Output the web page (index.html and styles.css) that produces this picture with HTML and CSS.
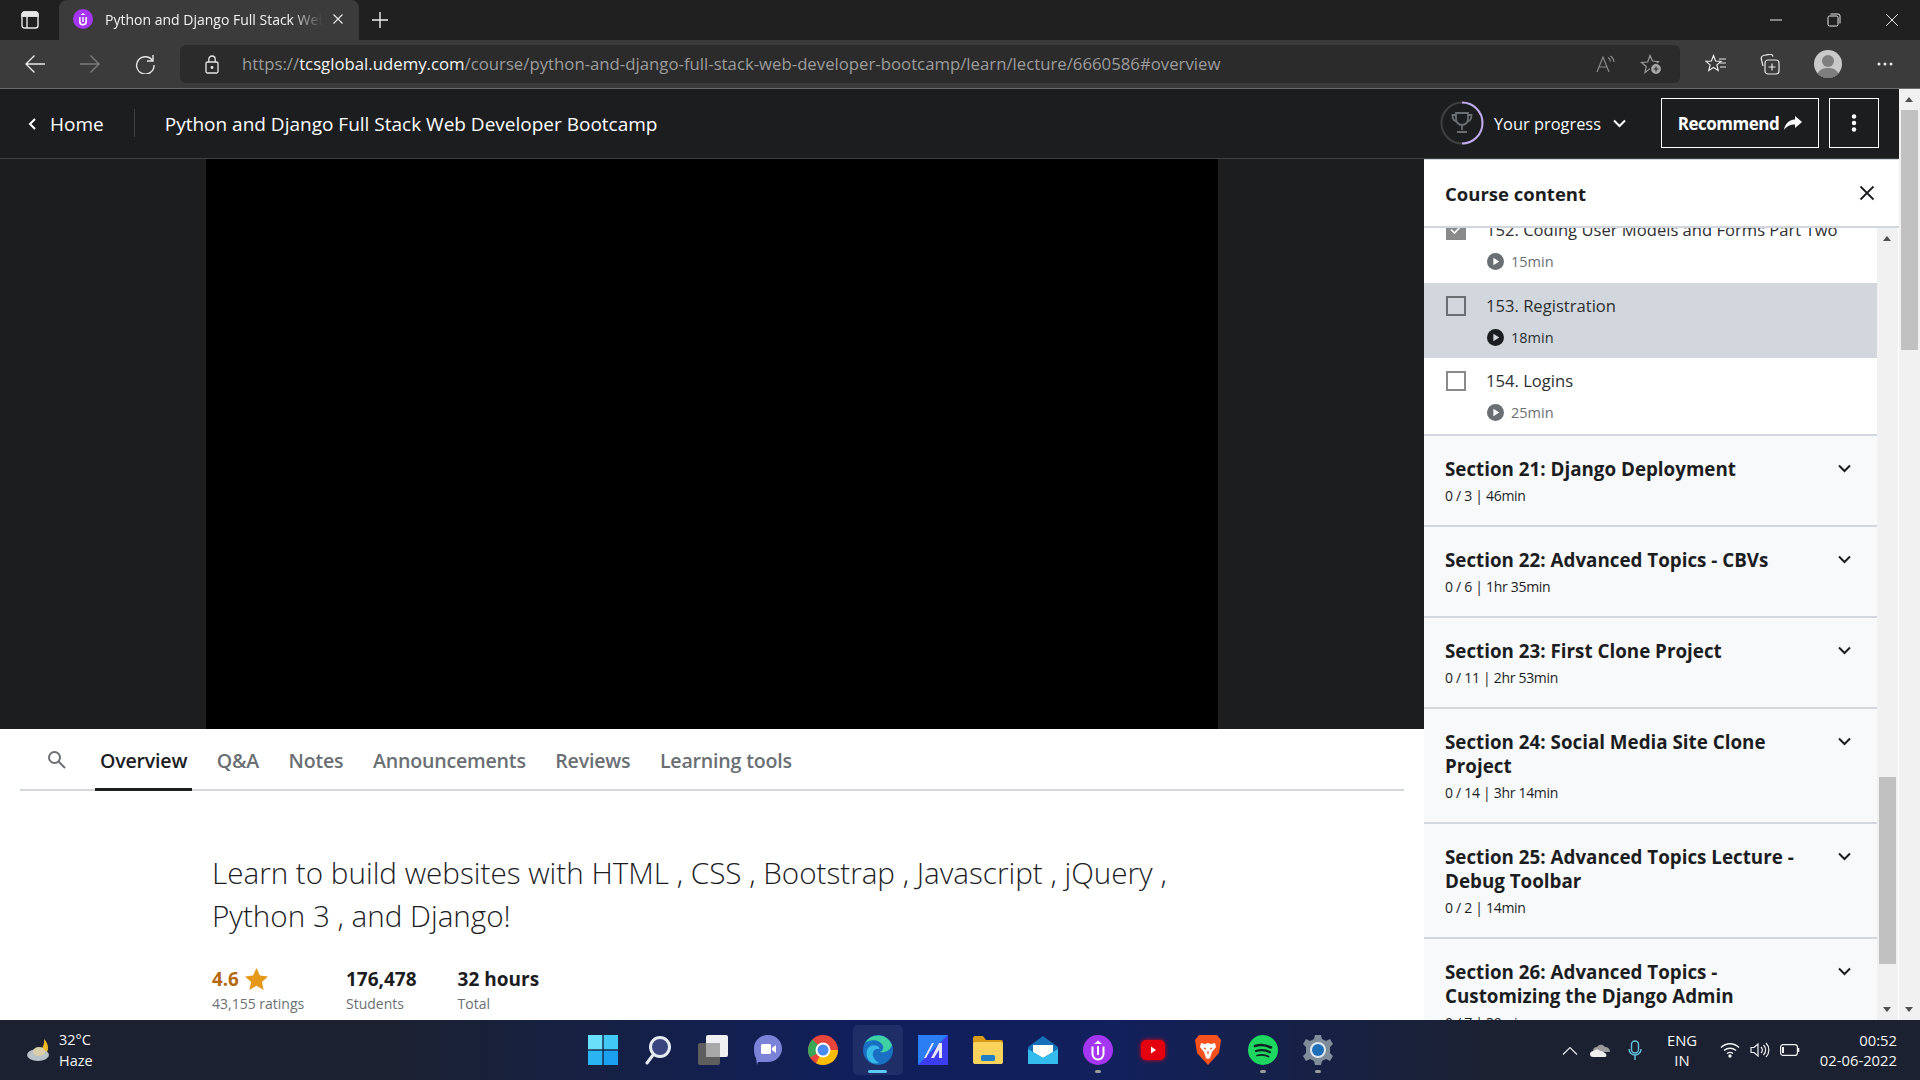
FILE: index.html
```html
<!DOCTYPE html>
<html>
<head>
    <title>Python and Django Full Stack Web Developer Bootcamp</title>
    <meta charset="utf-8">
    <link rel="stylesheet" href="styles.css">
</head>
<body>
    <!-- browser tabs -->
    <div class="tabstrip">
        <span class="tabs_btn">
            <svg width="18" height="18" viewBox="0 0 18 18" fill="none" stroke="#e8e8e8" stroke-width="1.4"><rect x="1" y="1" width="16" height="16" rx="2.5"/><path d="M1 5h16M6 5v12"/><path d="M1 3.5a2.5 2.5 0 0 1 2.5-2.5h11a2.5 2.5 0 0 1 2.5 2.5V5H1z" fill="#e8e8e8"/></svg>
        </span>
        <div class="tab">
            <svg width="20" height="20" viewBox="0 0 20 20"><circle cx="10" cy="10" r="10" fill="#a435f0"/><path d="M6.8 8v4.6a3.2 3.2 0 0 0 6.4 0V8" fill="none" stroke="#fff" stroke-width="1.6"/><path d="M7.5 6 10 4l2.5 2z" fill="#fff"/><path d="M10 8v5" stroke="#fff" stroke-width="1.4"/></svg>
            <span class="tab_title">Python and Django Full Stack Web Developer</span>
            <svg width="12" height="12" viewBox="0 0 12 12" stroke="#e8e8e8" stroke-width="1.2"><path d="M1.5 1.5l9 9M10.5 1.5l-9 9"/></svg>
        </div>
        <span class="new_tab">
            <svg width="18" height="18" viewBox="0 0 18 18" stroke="#f0f0f0" stroke-width="1.4"><path d="M9 1v16M1 9h16"/></svg>
        </span>
        <div class="win_btns">
            <svg width="14" height="14" viewBox="0 0 14 14" stroke="#e8e8e8" stroke-width="1"><path d="M1 7h12"/></svg>
            <svg width="14" height="14" viewBox="0 0 14 14" fill="none" stroke="#e8e8e8" stroke-width="1"><rect x="1" y="3" width="10" height="10" rx="1.5"/><path d="M3.5 1h7.5a2 2 0 0 1 2 2v7.5"/></svg>
            <svg width="14" height="14" viewBox="0 0 14 14" stroke="#e8e8e8" stroke-width="1"><path d="M1 1l12 12M13 1L1 13"/></svg>
        </div>
    </div>

    <!-- address bar -->
    <div class="toolbar">
        <div class="nav_btns">
            <svg width="20" height="20" viewBox="0 0 20 20" fill="none" stroke="#e8e8e8" stroke-width="1.4"><path d="M20 10H1M9.5 1.5 1 10l8.5 8.5"/></svg>
            <svg width="20" height="20" viewBox="0 0 20 20" fill="none" stroke="#7c7c7c" stroke-width="1.4"><path d="M0 10h19M10.5 1.5 19 10l-8.500 8.500"/></svg>
            <svg width="20" height="20" viewBox="0 0 20 20" fill="none" stroke="#e8e8e8" stroke-width="1.4"><path d="M17.500 6.500A8.700 8.700 0 1 0 19 11"/><path d="M18 1v6h-6"/></svg>
        </div>
        <div class="address">
            <svg width="14" height="19" viewBox="0 0 14 19" fill="none" stroke="#e8e8e8" stroke-width="1.300"><rect x="1" y="7" width="12" height="11" rx="1.500"/><path d="M3.800 7V4.200a3.200 3.200 0 0 1 6.400 0V7"/><circle cx="7" cy="12.500" r=".8" fill="#e8e8e8"/></svg>
            <span class="url"><span class="url_dim">https://</span>tcsglobal.udemy.com<span class="url_dim">/course/python-and-django-full-stack-web-developer-bootcamp/learn/lecture/6660586#overview</span></span>
            <span class="addr_icons">
                <svg width="20" height="18" viewBox="0 0 20 18" fill="none" stroke="#8a8a8a" stroke-width="1.200"><path d="M1 17 7 2l6 15M3.200 12h7.600"/><path d="M13 1.500a5 5 0 0 1 2.500 4M15.500 0a8 8 0 0 1 3.500 6" transform="translate(-1 1)"/></svg>
                <svg width="22" height="21" viewBox="0 0 22 21" fill="none" stroke="#9a9a9a" stroke-width="1.200"><path d="M10 1.500 12.500 7l6 .6-4.500 4 1 5.900L10 14.600l-5 3.900 1.200-6-4.700-4 6.200-.5z"/><circle cx="16" cy="15" r="5.500" fill="#a8a8a8" stroke="#2b2b2b"/><path d="M16 12.500v5M13.500 15h5" stroke="#2b2b2b"/></svg>
            </span>
        </div>
        <div class="tool_icons">
            <svg class="tool_fav" width="21" height="20" viewBox="0 0 21 20" fill="none" stroke="#e8e8e8" stroke-width="1.200"><path d="M8.500 1.500 10.600 7l5.400.4-4.100 3.500 1.300 5.600-4.700-3-4.700 3 1.300-5.600L1 7.400 6.400 7z"/><path d="M14 5h7M15 9h6M15 13h6"/></svg>
            <svg class="tool_col" width="20" height="21" viewBox="0 0 20 21" fill="none" stroke="#e8e8e8" stroke-width="1.200"><path d="M3 12 1.300 5A3 3 0 0 1 3.500 1.500l6-1.200A3 3 0 0 1 13 2.500"/><rect x="5" y="6" width="14" height="14" rx="3"/><path d="M12 9.500v7M8.500 13h7"/></svg>
            <svg class="tool_avatar" width="28" height="28" viewBox="0 0 28 28"><circle cx="14" cy="14" r="14" fill="#c9c9c9"/><circle cx="14" cy="11" r="6" fill="#7e7e7e"/><path d="M3.500 23.500C6 19 10 18 14 18s8 1 10.500 5.500A14 14 0 0 1 3.500 23.500z" fill="#7e7e7e"/></svg>
            <svg class="tool_more" width="16" height="4" viewBox="0 0 16 4" fill="#e8e8e8"><circle cx="2" cy="2" r="1.500"/><circle cx="8" cy="2" r="1.500"/><circle cx="14" cy="2" r="1.500"/></svg>
        </div>
    </div>

    <div class="page">
        <div class="course">
            <div class="course_head">
                <a class="home_link">
                    <svg width="8" height="12" viewBox="0 0 8 12" fill="none" stroke="#fff" stroke-width="2"><path d="M7 1 2 6l5 5"/></svg>
                    Home
                </a>
                <span class="head_sep"></span>
                <span class="course_title">Python and Django Full Stack Web Developer Bootcamp</span>
                <div class="progress">
                    <svg width="44" height="44" viewBox="0 0 44 44" fill="none">
                        <circle cx="22" cy="22" r="20.500" stroke="#3e4143" stroke-width="2"/>
                        <path d="M22 1.500a20.500 20.500 0 0 1 0 41" stroke="#c0a9ee" stroke-width="2"/>
                        <path d="M16 12h12v6a6 6 0 0 1-12 0zM22 24v5M17 31h10M16 14h-3.500c0 4 1.500 6 4 6.500M28 14h3.500c0 4-1.500 6-4 6.500" stroke="#6a6f73" stroke-width="1.800"/>
                    </svg>
                    <span>Your progress</span>
                    <svg width="13" height="9" viewBox="0 0 13 9" fill="none" stroke="#fff" stroke-width="2"><path d="M1 1.500l5.500 5.500L12 1.500"/></svg>
                </div>
                <button class="recommend">Recommend
                    <svg width="18" height="14" viewBox="0 0 18 14" fill="#fff"><path d="M11 0l7 6-7 6V8.500C6 8.500 3 10 0 14 1 8 4.500 4 11 3.500z"/></svg>
                </button>
                <button class="more_btn">
                    <svg width="6" height="18" viewBox="0 0 6 18" fill="#fff"><circle cx="3" cy="2.500" r="2.200"/><circle cx="3" cy="9" r="2.200"/><circle cx="3" cy="15.500" r="2.200"/></svg>
                </button>
            </div>

            <div class="course_body">
                <div class="main_col">
                    <div class="video_wrap"><div class="video"></div></div>
                    <div class="tabs_bar">
                        <svg class="search_icon" width="19" height="19" viewBox="0 0 19 19" fill="none" stroke="#6a6f73" stroke-width="2"><circle cx="7.500" cy="7.500" r="5.500"/><path d="M11.500 11.500 18 18"/></svg>
                        <span class="tab_link active">Overview</span>
                        <span class="tab_link">Q&amp;A</span>
                        <span class="tab_link">Notes</span>
                        <span class="tab_link">Announcements</span>
                        <span class="tab_link">Reviews</span>
                        <span class="tab_link">Learning tools</span>
                    </div>
                    <div class="overview">
                        <p class="headline">Learn to build websites with HTML , CSS , Bootstrap , Javascript , jQuery , Python 3 , and Django!</p>
                        <div class="stats">
                            <div class="stat stat_rating">
                                <div class="rating">4.6
                                    <svg width="23" height="22" viewBox="0 0 23 22" fill="#e59819"><path d="M11.500 0l3.400 7.600 8.100.8-6.100 5.500 1.800 8.100-7.200-4.200L4.300 22l1.800-8.100L0 8.400l8.100-.8z"/></svg>
                                </div>
                                <div class="stat_label">43,155 ratings</div>
                            </div>
                            <div class="stat stat_students">
                                <div class="stat_num">176,478</div>
                                <div class="stat_label">Students</div>
                            </div>
                            <div class="stat">
                                <div class="stat_num">32 hours</div>
                                <div class="stat_label">Total</div>
                            </div>
                        </div>
                    </div>
                </div>

                <div class="sidebar">
                    <div class="side_head">
                        <span>Course content</span>
                        <svg width="16" height="16" viewBox="0 0 16 16" stroke="#1c1d1f" stroke-width="1.800"><path d="M1.500 1.500l13 13M14.500 1.500l-13 13"/></svg>
                    </div>
                    <div class="side_body">
                        <div class="side_list">
                            <div class="lecture first">
                                <span class="check done"><svg width="12" height="9" viewBox="0 0 12 9" fill="none" stroke="#fff" stroke-width="1.600"><path d="M1 4.500 4.500 8 11 1"/></svg></span>
                                <div>
                                    <div class="lec_title">152. Coding User Models and Forms Part Two</div>
                                    <div class="lec_time"><svg class="play" viewBox="0 0 16 16"><circle cx="8" cy="8" r="8"/><path d="M6 4.500 11.500 8 6 11.500z" fill="#fff"/></svg>15min</div>
                                </div>
                            </div>
                            <div class="lecture current">
                                <span class="check"></span>
                                <div>
                                    <div class="lec_title">153. Registration</div>
                                    <div class="lec_time"><svg class="play" viewBox="0 0 16 16"><circle cx="8" cy="8" r="8"/><path d="M6 4.500 11.500 8 6 11.500z" fill="#d1d7dc"/></svg>18min</div>
                                </div>
                            </div>
                            <div class="lecture last">
                                <span class="check"></span>
                                <div>
                                    <div class="lec_title">154. Logins</div>
                                    <div class="lec_time"><svg class="play" viewBox="0 0 16 16"><circle cx="8" cy="8" r="8"/><path d="M6 4.500 11.500 8 6 11.500z" fill="#fff"/></svg>25min</div>
                                </div>
                            </div>
                            <div class="section">
                                <div><div class="sec_title">Section 21: Django Deployment</div><div class="sec_meta">0 / 3 | 46min</div></div>
                                <svg class="chev" viewBox="0 0 13 9"><path d="M1 1.500l5.500 5.500L12 1.500"/></svg>
                            </div>
                            <div class="section">
                                <div><div class="sec_title">Section 22: Advanced Topics - CBVs</div><div class="sec_meta">0 / 6 | 1hr 35min</div></div>
                                <svg class="chev" viewBox="0 0 13 9"><path d="M1 1.500l5.500 5.500L12 1.500"/></svg>
                            </div>
                            <div class="section">
                                <div><div class="sec_title">Section 23: First Clone Project</div><div class="sec_meta">0 / 11 | 2hr 53min</div></div>
                                <svg class="chev" viewBox="0 0 13 9"><path d="M1 1.500l5.500 5.500L12 1.500"/></svg>
                            </div>
                            <div class="section">
                                <div><div class="sec_title">Section 24: Social Media Site Clone<br>Project</div><div class="sec_meta">0 / 14 | 3hr 14min</div></div>
                                <svg class="chev" viewBox="0 0 13 9"><path d="M1 1.500l5.500 5.500L12 1.500"/></svg>
                            </div>
                            <div class="section">
                                <div><div class="sec_title">Section 25: Advanced Topics Lecture -<br>Debug Toolbar</div><div class="sec_meta">0 / 2 | 14min</div></div>
                                <svg class="chev" viewBox="0 0 13 9"><path d="M1 1.500l5.500 5.500L12 1.500"/></svg>
                            </div>
                            <div class="section">
                                <div><div class="sec_title">Section 26: Advanced Topics -<br>Customizing the Django Admin</div><div class="sec_meta">0 / 7 | 39min</div></div>
                                <svg class="chev" viewBox="0 0 13 9"><path d="M1 1.500l5.500 5.500L12 1.500"/></svg>
                            </div>
                        </div>
                        <div class="side_scroll">
                            <i class="arrow_up"></i>
                            <b class="side_thumb"></b>
                            <i class="arrow_down"></i>
                        </div>
                    </div>
                </div>
            </div>
        </div>
        <div class="page_scroll">
            <i class="arrow_up"></i>
            <b class="page_thumb"></b>
            <i class="arrow_down"></i>
        </div>
    </div>

    <!-- windows taskbar -->
    <div class="taskbar">
        <div class="weather">
            <svg width="26" height="24" viewBox="0 0 26 24"><path d="M19 1c6 6 5 14-1 17l-8-3c6-2 10-7 9-14z" fill="#f3b81f"/><ellipse cx="13" cy="17" rx="11" ry="6" fill="#b8c2c8"/><ellipse cx="14" cy="13.500" rx="6" ry="4.500" fill="#d8cfa8"/></svg>
            <div><div>32°C</div><div>Haze</div></div>
        </div>
        <div class="task_icons">
            <span class="task"><svg width="30" height="30" viewBox="0 0 30 30"><rect x="0" y="0" width="14.300" height="14.300" fill="#6ae0fa"/><rect x="15.700" y="0" width="14.300" height="14.300" fill="#42c8f5"/><rect x="0" y="15.700" width="14.300" height="14.300" fill="#2bb4f3"/><rect x="15.700" y="15.700" width="14.300" height="14.300" fill="#1aa0ef"/></svg></span>
            <span class="task"><svg width="28" height="30" viewBox="0 0 28 30" fill="#3a4580" stroke="#e6ebf2" stroke-width="3"><circle cx="16" cy="12" r="9.500"/><path d="M9 20 3 28" stroke-linecap="round" fill="none"/></svg></span>
            <span class="task"><svg width="30" height="30" viewBox="0 0 30 30"><rect x="0" y="8" width="22" height="22" rx="2" fill="#5e5e5e"/><rect x="8" y="0" width="22" height="22" rx="2" fill="#eef0f2"/><rect x="8" y="8" width="14" height="14" fill="#a8a8a8"/></svg></span>
            <span class="task"><svg width="28" height="30" viewBox="0 0 28 30"><path d="M14 0c8 0 14 6 14 13.500S22 27 14 27H4l-1 3-1-7C.5 21 0 17 0 13.500 0 6 6 0 14 0z" fill="#7b83d8"/><rect x="7" y="9" width="10" height="10" rx="1.500" fill="#fff"/><path d="M18 13l4-3v8l-4-3z" fill="#fff"/></svg></span>
            <span class="task"><svg width="30" height="30" viewBox="0 0 30 30"><circle cx="15" cy="15" r="15" fill="#e8453c"/><path d="M15 15 2 22.500A15 15 0 0 1 4.400 4.400z" fill="#3aa757"/><path d="M15 15h15A15 15 0 0 1 8 28.300z" fill="#fbbc05"/><circle cx="15" cy="15" r="7.500" fill="#fff"/><circle cx="15" cy="15" r="5.500" fill="#4a8af4"/></svg></span>
            <span class="task task_on"><svg width="30" height="30" viewBox="0 0 30 30"><circle cx="15" cy="15" r="15" fill="#1b6fc2"/><path d="M29 10A15 15 0 0 0 2 8c5-4 15-4 18 3 1 3-1 5-3 6 5 1 10-1 12-7z" fill="#3fd0a4"/><path d="M16 28C8 30 2 24 4 15c2-5 10-7 13-1-5-1-8 2-7 7 1 3 3 5 6 7z" fill="#36b9e6"/></svg></span>
            <span class="task"><svg width="30" height="30" viewBox="0 0 30 30"><rect width="30" height="30" fill="#3c3cf0"/><path d="M0 0h30L0 30z" fill="#2a7df2"/><path d="M6 23 14 8h2L8 23zM13 23l8-15h3v15h-3v-8l-5 8z" fill="#e8e8f8"/></svg></span>
            <span class="task"><svg width="30" height="28" viewBox="0 0 30 28"><path d="M0 2a2 2 0 0 1 2-2h8l3 4h15a2 2 0 0 1 2 2v3H0z" fill="#d99a17"/><rect y="6" width="30" height="22" rx="2" fill="#fbd35c"/><rect x="8" y="19" width="14" height="6" rx="1.500" fill="#1f7fc4"/></svg></span>
            <span class="task"><svg width="30" height="28" viewBox="0 0 30 28"><path d="M15 0 30 11v17H0V11z" fill="#1470b8"/><path d="M5 9h20v7l-10 6-10-6z" fill="#fff"/><path d="M0 13l15 9 15-9v15H0z" fill="#35bcef"/></svg></span>
            <span class="task task_dot"><svg width="30" height="30" viewBox="0 0 30 30"><ellipse cx="15" cy="15" rx="15" ry="15" fill="#a435f0"/><path d="M9.500 11.500V19a5.500 5.500 0 0 0 11 0v-7.500" fill="none" stroke="#fff" stroke-width="2"/><path d="M11 9 15 5.500 19 9z" fill="#fff"/><path d="M15 11v9" stroke="#fff" stroke-width="2"/></svg></span>
            <span class="task"><svg class="yt_icon" width="26" height="22" viewBox="0 0 26 22"><rect x="1" y="1" width="24" height="20" rx="5" fill="#e5000f"/><path d="M11 7.500l5 3.500-5 3.500z" fill="#fff"/></svg></span>
            <span class="task"><svg width="26" height="30" viewBox="0 0 26 30"><path d="M4 0h18l4 5-2 13-11 12L2 18 0 5z" fill="#f4511e"/><path d="M6 8l4 1 3-1 3 1 4-1 1 4-4 5-2 6-2 1-2-1-2-6-4-5z" fill="#fff"/><path d="M9 13l2 1M17 13l-2 1M13 16v3" stroke="#f4511e" stroke-width="1.200"/></svg></span>
            <span class="task task_dot"><svg width="30" height="30" viewBox="0 0 30 30" fill="none" stroke="#122" stroke-linecap="round"><circle cx="15" cy="15" r="15" fill="#1ed760" stroke="none"/><path d="M7 11c6-2 11-1 16 1.500" stroke-width="2.600"/><path d="M8 16c5-1.500 10-1 14 1.200" stroke-width="2.200"/><path d="M9 20.500c4-1 8-.8 11.500 1" stroke-width="1.800"/></svg></span>
            <span class="task task_dot"><svg width="30" height="30" viewBox="0 0 30 30"><path d="M12 0h6l1 4 4 2 4-2 3 5-3 3v6l3 3-3 5-4-2-4 2-1 4h-6l-1-4-4-2-4 2-3-5 3-3v-6L0 9l3-5 4 2 4-2z" fill="#7f8c99"/><circle cx="15" cy="15" r="8" fill="#dfe8ee"/><circle cx="15" cy="15" r="6" fill="#1e6fb8"/></svg></span>
        </div>
        <div class="tray">
            <svg class="tray_chev" width="16" height="9" viewBox="0 0 16 9" fill="none" stroke="#e8e8e8" stroke-width="1.200"><path d="M1 8.500l7-7 7 7"/></svg>
            <svg class="tray_cloud" width="20" height="13" viewBox="0 0 20 13"><path d="M3 7a4 4 0 0 1 4-4c1-2 5-4 8 0 3 0 5 2 5 5H6z" fill="#9a9a9a"/><path d="M0 10c0-2 2-3.500 4-3 1-2 5-2 6 0 3 0 5 2 6 3 1 2 0 3-1 3H3c-2 0-3-1-3-3z" fill="#efefef"/></svg>
            <svg class="tray_mic" width="14" height="20" viewBox="0 0 14 20" fill="none" stroke="#63c1de" stroke-width="1.400"><rect x="3.500" y="1" width="7" height="12" rx="3.500"/><path d="M1 9a6 6 0 0 0 12 0M7 15v5"/></svg>
            <div class="lang">ENG<br>IN</div>
            <svg class="tray_wifi" width="20" height="16" viewBox="0 0 20 16" fill="none" stroke="#f0f0f0" stroke-width="1.400"><path d="M1 5.500c5-5 13-5 18 0M4 8.500c3.500-3 8.500-3 12 0M7 11.500c2-1.500 4-1.500 6 0"/><circle cx="10" cy="14" r="1" fill="#f0f0f0"/></svg>
            <svg class="tray_sound" width="20" height="16" viewBox="0 0 20 16" fill="none" stroke="#f0f0f0" stroke-width="1.200"><path d="M1 5.500h3L8 2v12l-4-3.500H1zM11 5a4 4 0 0 1 0 6M13.500 3a7 7 0 0 1 0 10M16 1a10 10 0 0 1 0 14"/></svg>
            <svg class="tray_batt" width="20" height="12" viewBox="0 0 20 12" fill="none" stroke="#f0f0f0" stroke-width="1.200"><rect x=".6" y=".6" width="16.800" height="10.800" rx="2.500"/><path d="M3 3v6" stroke-width="2"/><path d="M18.500 4v4" stroke-width="1.600"/></svg>
            <div class="clock">00:52<br>02-06-2022</div>
        </div>
    </div>
</body>
</html>
```

FILE: styles.css
```css
* {
    box-sizing: border-box;
}
html, body {
    margin: 0;
    height: 100%;
    overflow: hidden;
}
body {
    width: 1920px;
    height: 1080px;
    display: flex;
    flex-direction: column;
    font-family: "Open Sans", "Noto Sans", sans-serif;
    color: #1c1d1f;
    background: #1c1d1f;
}
svg {
    flex: none;
    display: block;
}

/* browser tabs */
.tabstrip {
    height: 40px;
    flex: none;
    display: flex;
    align-items: center;
    background: #202020;
}
.tabs_btn {
    width: 59px;
    display: flex;
    justify-content: center;
}
.tab {
    width: 300px;
    height: 40px;
    padding: 0 15px 2px 14px;
    display: flex;
    align-items: center;
    background: #3b3b3b;
    border-top-left-radius: 8px;
    border-top-right-radius: 8px;
    color: #f2f2f2;
    font-size: 14px;
}
.tab_title {
    width: 218px;
    margin: 0 9px 0 12px;
    white-space: nowrap;
    overflow: hidden;
    -webkit-mask-image: linear-gradient(to right, #000 85%, transparent);
    mask-image: linear-gradient(to right, #000 85%, transparent);
}
.new_tab {
    margin-left: 12px;
}
.win_btns {
    margin-left: auto;
    padding-right: 21px;
    display: flex;
    gap: 44px;
}

/* address bar */
.toolbar {
    height: 49px;
    flex: none;
    display: flex;
    align-items: flex-start;
    padding: 5px 0 0 25px;
    background: #3b3b3b;
    border-bottom: 1px solid #6b6b6b;
}
.nav_btns {
    width: 155px;
    height: 38px;
    display: flex;
    align-items: center;
    gap: 35px;
}
.address {
    width: 1500px;
    height: 38px;
    padding: 0 18px 0 25px;
    display: flex;
    align-items: center;
    background: #2b2b2b;
    border-radius: 6px;
}
.url {
    margin: -2px 0 0 23px;
    font-size: 16.750px;
    color: #f4f4f4;
    white-space: nowrap;
}
.url_dim {
    color: #9c9c9c;
}
.addr_icons {
    margin-left: auto;
    display: flex;
    align-items: center;
    gap: 24px;
}
.tool_icons {
    height: 38px;
    display: flex;
    align-items: center;
}
.tool_fav {
    margin-left: 25px;
}
.tool_col {
    margin-left: 34px;
}
.tool_avatar {
    margin-left: 34px;
}
.tool_more {
    margin-left: 35px;
}

/* page */
.page {
    flex: 1;
    min-height: 0;
    display: flex;
    background: #fff;
}
.course {
    width: 1899px;
    display: flex;
    flex-direction: column;
}
.course_head {
    height: 70px;
    flex: none;
    display: flex;
    align-items: center;
    padding: 0 20px 1px 28px;
    background: #1c1d1f;
    border-bottom: 1px solid #3e4143;
    color: #fff;
}
.home_link {
    display: flex;
    align-items: center;
    gap: 14px;
    padding-top: 1px;
    font-size: 19px;
}
.head_sep {
    width: 1px;
    height: 28px;
    margin: 0 30px;
    background: #3e4143;
}
.course_title {
    padding-top: 1px;
    font-size: 19px;
}
.progress {
    margin-left: auto;
    display: flex;
    align-items: center;
    font-size: 16.400px;
    color: #f7f9fa;
}
.progress span {
    margin: 0 12px 0 10px;
}
.recommend {
    width: 158px;
    height: 50px;
    margin-left: 35px;
    padding: 0;
    display: flex;
    align-items: center;
    justify-content: center;
    gap: 5px;
    background: transparent;
    border: 1px solid #fff;
    color: #fff;
    font: 700 17px "Open Sans", sans-serif;
    letter-spacing: -.5px;
}
.more_btn {
    width: 50px;
    height: 50px;
    margin-left: 10px;
    padding: 0;
    display: flex;
    align-items: center;
    justify-content: center;
    background: transparent;
    border: 1px solid #fff;
}
.course_body {
    flex: 1;
    min-height: 0;
    display: flex;
}
.main_col {
    width: 1424px;
    display: flex;
    flex-direction: column;
    overflow: hidden;
}
.video_wrap {
    height: 570px;
    flex: none;
    display: flex;
    justify-content: center;
    background: #1c1d1f;
}
.video {
    width: 1012px;
    background: #000;
}
.tabs_bar {
    height: 62px;
    flex: none;
    margin: 0 20px;
    padding-left: 27px;
    display: flex;
    align-items: stretch;
    border-bottom: 2px solid #d1d7dc;
}
.search_icon {
    margin: 21px 34px 0 0;
}
.tab_link {
    margin-right: 29.500px;
    padding-top: 2px;
    display: flex;
    align-items: center;
    font-size: 19.600px;
    font-weight: 600;
    color: #6a6f73;
    letter-spacing: -.2px;
}
.tab_link.active {
    position: relative;
    color: #1c1d1f;
}
.tab_link.active::after {
    content: "";
    position: absolute;
    left: -5px;
    right: -5px;
    bottom: -2px;
    height: 3px;
    background: #1c1d1f;
}
.overview {
    padding: 60px 0 0 212px;
}
.headline {
    width: 1000px;
    margin: 0;
    font-size: 29.640px;
    line-height: 43px;
    font-weight: 300;
}
.stats {
    margin-top: 30px;
    display: flex;
}
.stat {
    margin-right: 41px;
}
.stat_rating {
    width: 93px;
}
.rating {
    display: flex;
    align-items: center;
    gap: 6px;
    height: 24px;
    font-size: 18.800px;
    font-weight: 700;
    color: #b4690e;
}
.stat_num {
    height: 24px;
    line-height: 24px;
    font-size: 19px;
    font-weight: 700;
}
.stat_label {
    margin-top: 3px;
    font-size: 14px;
    line-height: 20px;
    color: #6a6f73;
}

/* course content sidebar */
.sidebar {
    width: 475px;
    display: flex;
    flex-direction: column;
    border-top: 1px solid #d1d7dc;
    overflow: hidden;
}
.side_head {
    height: 68px;
    flex: none;
    padding: 0 24px 0 21px;
    display: flex;
    align-items: center;
    justify-content: space-between;
    border-bottom: 2px solid #d1d7dc;
    font-size: 18.500px;
    font-weight: 700;
    background: #fff;
}
.side_body {
    flex: 1;
    min-height: 0;
    display: flex;
    overflow: hidden;
}
.side_list {
    width: 453px;
    margin-top: -21px;
}
.lecture {
    height: 75px;
    padding: 12.500px 0 0 22px;
    display: flex;
    gap: 20px;
    background: #fff;
    font-size: 16.600px;
}
.lecture.first {
    height: 76px;
}
.lecture.current {
    background: #d1d7dc;
}
.lecture.last {
    height: 78px;
    border-bottom: 2px solid #d1d7dc;
}
.check {
    width: 20px;
    height: 20px;
    display: flex;
    align-items: center;
    justify-content: center;
    border: 2px solid #8a8a8a;
    background: #fff;
}
.current .check {
    background: transparent;
    border-color: #6a6f73;
}
.check.done {
    background: #8a8a8a;
}
.lec_title {
    height: 20px;
    line-height: 20px;
    white-space: nowrap;
    color: #2d2f31;
}
.lec_time {
    margin-top: 12px;
    display: flex;
    align-items: center;
    gap: 7px;
    font-size: 14.500px;
    line-height: 20px;
    color: #6a6f73;
}
.current .lec_time {
    color: #2d2f31;
}
.play {
    width: 17px;
    height: 17px;
    margin-left: 1px;
    fill: #6a6f73;
}
.current .play {
    fill: #1c1d1f;
}
.section {
    padding: 21px 26px 19px 21px;
    display: flex;
    justify-content: space-between;
    background: #f7f9fa;
    border-bottom: 2px solid #d1d7dc;
}
.sec_title {
    font-size: 18.800px;
    font-weight: 700;
    line-height: 24px;
}
.sec_meta {
    margin-top: 5px;
    font-size: 14px;
    letter-spacing: -.3px;
    line-height: 20px;
}
.chev {
    width: 13px;
    height: 9px;
    margin: 7px 0 0;
    fill: none;
    stroke: #1c1d1f;
    stroke-width: 2;
}
.side_scroll {
    position: relative;
    width: 22px;
    background: #f1f1f1;
    border-right: 1px solid #fff;
}
.side_thumb {
    position: absolute;
    left: 2px;
    top: 549px;
    width: 17px;
    height: 187px;
    background: #c1c1c1;
}
.page_scroll {
    position: relative;
    width: 21px;
    background: #f1f1f1;
}
.page_thumb {
    position: absolute;
    left: 2px;
    top: 21px;
    width: 17px;
    height: 240px;
    background: #c1c1c1;
}
.arrow_up, .arrow_down {
    position: absolute;
    left: 6px;
    border-left: 4.500px solid transparent;
    border-right: 4.500px solid transparent;
}
.arrow_up {
    top: 8px;
    border-bottom: 5px solid #505050;
}
.arrow_down {
    bottom: 8px;
    border-top: 5px solid #505050;
}

/* windows taskbar */
.taskbar {
    height: 60px;
    flex: none;
    display: grid;
    grid-template-columns: 575px 770px 1fr;
    align-items: center;
    background: linear-gradient(to right, #1b2130 0%, #1b2130 20%, #0f1f5c 45%, #12205c 58%, #1b2130 78%, #1b2130 100%);
    color: #f4f4f4;
    font-size: 14.500px;
}
.weather {
    display: flex;
    align-items: center;
    gap: 8px;
    padding-left: 25px;
    line-height: 21px;
}
.task_icons {
    display: flex;
}
.task {
    position: relative;
    width: 55px;
    height: 50px;
    display: flex;
    align-items: center;
    justify-content: center;
}
.task_on {
    background: rgba(255, 255, 255, .07);
    border-radius: 5px;
    margin: 0 2.500px;
    width: 50px;
}
.task_on::after, .task_dot::after {
    content: "";
    position: absolute;
    left: 50%;
    bottom: 2px;
    width: 6px;
    height: 3px;
    margin-left: -3px;
    border-radius: 2px;
    background: #9b9b9b;
}
.task_on::after {
    width: 19px;
    margin-left: -9.500px;
    background: #5cc8f5;
}
.yt_icon {
    filter: drop-shadow(0 0 2px #e5000f);
}
.tray {
    display: flex;
    align-items: center;
    padding-right: 23px;
    font-size: 14.800px;
}
.tray_chev {
    margin-left: 217px;
}
.tray_cloud {
    margin-left: 12px;
}
.tray_mic {
    margin-left: 18px;
}
.lang {
    width: 54px;
    text-align: center;
    line-height: 20px;
    margin-left: 13px;
}
.tray_wifi {
    margin-left: 11px;
}
.tray_sound {
    margin-left: 10px;
}
.tray_batt {
    margin-left: 10px;
}
.clock {
    margin-left: auto;
    text-align: right;
    line-height: 20px;
}
```
